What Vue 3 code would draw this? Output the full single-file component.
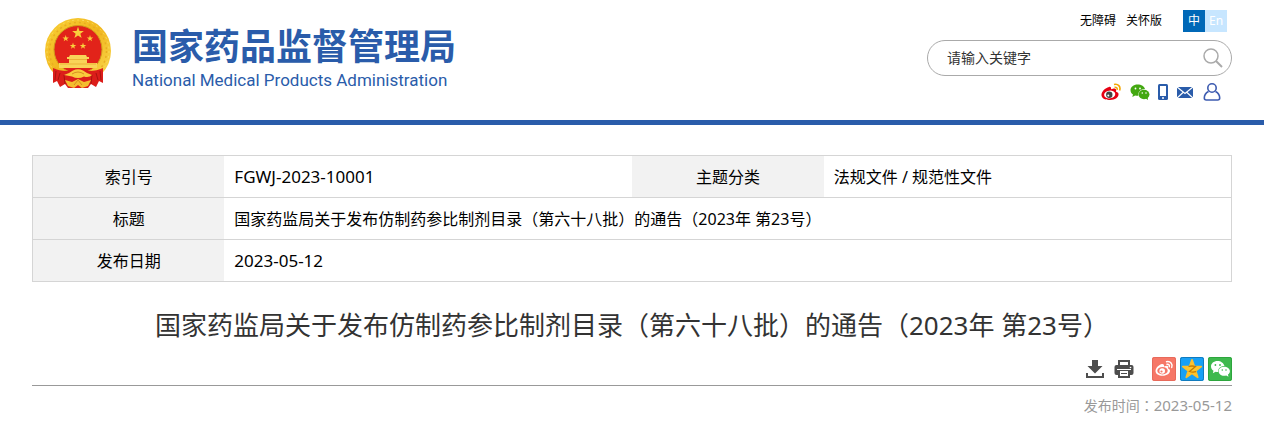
<script setup>
const title = '国家药监局关于发布仿制药参比制剂目录（第六十八批）的通告（2023年 第23号）'
const star = 'M0-10 2.35-3.24 9.51-3.09 3.8 1.24 5.88 8.09 0 4-5.88 8.09-3.8 1.24-9.51-3.09-2.35-3.24Z'
const stars = [
  'translate(33 15) scale(.62)',
  'translate(20.700 20.500) scale(.34)',
  'translate(45 20.500) scale(.34)',
  'translate(28 28) scale(.34)',
  'translate(38 28) scale(.34)',
]
</script>

<template>
  <header class="header">
    <a class="brand" href="#">
      <svg class="emblem" viewBox="0 0 67 71" aria-hidden="true">
        <defs>
          <linearGradient id="gold" x1="0" y1="0" x2="1" y2="1">
            <stop offset="0" stop-color="#f8cf35" />
            <stop offset=".5" stop-color="#f1b71f" />
            <stop offset="1" stop-color="#fadb50" />
          </linearGradient>
        </defs>
        <circle cx="33" cy="33" r="33" fill="url(#gold)" />
        <circle cx="33" cy="33" r="28.500" fill="none" stroke="#e9ad22" stroke-width="1.500" stroke-dasharray="2 3" />
        <circle cx="33" cy="33" r="31" fill="none" stroke="#fbdb5c" stroke-width="1" stroke-dasharray="2 3" />
        <circle cx="33" cy="31.500" r="24" fill="#e2231a" stroke="#d09a1c" />
        <path v-for="s in stars" :key="s" :d="star" :transform="s" fill="#f9cf3c" />
        <path d="M25 37h16l1 2h2v2h-2v4h10v5H14v-5h10v-4h-2v-2h2Z" fill="#f9d458" />
        <path d="M24 41.500h18M15 46h36" stroke="#e5a52a" stroke-width=".7" />
        <path d="M8 50Q14 53 22 53L33 50 44 53Q52 53 58 50V65L54 63 51 69 46 66 43 70H23L20 66 15 69 12 63 8 65Z" fill="#dc1d1a" />
        <path d="M11 53 10 62M15 55 13 62M19 57 20 66M55 53 56 62M51 55 53 62M47 57 46 66" stroke="#a9130e" stroke-width="1" />
        <path d="M19 57Q25 55 28 52.500 33 50 38 52.500 41 55 47 57 44 60 39 58.500 33 61.500 27 58.500 22 60Z" fill="#f9cb3c" />
        <path d="M23 68 20 62 27 64 33 61 39 64 46 62 43 68 37 70 33 67 29 70Z" fill="#f4bd2f" />
        <path d="M27 56Q33 52 39 56M29 67 33 62 37 67" fill="none" stroke="#cf7f1a" stroke-width=".8" />
      </svg>
      <span class="brand-text">
        <span class="brand-cn">国家药品监督管理局</span>
        <span class="brand-en">National Medical Products Administration</span>
      </span>
    </a>
    <div class="tools">
      <nav class="top-links">
        <a href="#">无障碍</a>
        <a href="#">关怀版</a>
        <span class="lang"><a class="on" href="#">中</a><a href="#">En</a></span>
      </nav>
      <form class="search" role="search" @submit.prevent>
        <input type="text" aria-label="请输入关键字" placeholder="请输入关键字" />
        <button type="submit" aria-label="搜索">
          <svg viewBox="0 0 20 20" width="20" height="20" fill="none" stroke="#aaa" stroke-width="1.500">
            <circle cx="8" cy="8" r="7" /><path d="m13 13 6 6" stroke-width="2" />
          </svg>
        </button>
      </form>
      <nav class="social">
        <a href="#" aria-label="微博">
          <svg viewBox="0 0 20 18" width="20" height="18">
            <path d="M8 4C4 5 0 9 .5 12.500 1 16 5 17 9 17c5 0 9-3 8.500-6 0-1.500-1.500-2-2.500-2.300.5-1.500 0-3-1.500-3.200-1 0-2 .2-3.500.8C10.500 4.500 9.500 3.500 8 4Z" fill="#e60012" />
            <ellipse cx="8.700" cy="11.500" rx="5.600" ry="3.900" transform="rotate(-8 8.700 11.500)" fill="#fff" />
            <circle cx="8.300" cy="11.800" r="3.200" fill="#444" /><circle cx="7.300" cy="12.600" r="1" fill="#fff" />
            <path d="M13 1.500c4-1 7 2 5.600 6M13.500 4.300c2-.4 3 .8 2.600 2.600" fill="none" stroke="#f3a600" stroke-width="1.600" />
          </svg>
        </a>
        <a href="#" aria-label="微信">
          <svg viewBox="0 0 20 18" width="20" height="18">
            <path d="M7.500 1.500C3.500 1.500.5 4 .5 7c0 2 1 3.500 2.500 4.500L2.300 14l2.900-1.500c1 .3 2 .4 3.100.3-.5-4 2.700-6.800 6.700-6.700C14.400 3.500 11.500 1.500 7.500 1.500Z" fill="#43a811" />
            <ellipse cx="14" cy="11.500" rx="5.500" ry="4.700" fill="#43a811" /><path d="m15 15 3 2-.4-3Z" fill="#43a811" />
            <g fill="#fff"><circle cx="5.500" cy="5.500" r=".9" /><circle cx="10" cy="5.500" r=".9" /><circle cx="12.300" cy="10" r=".8" /><circle cx="16" cy="10" r=".8" /></g>
          </svg>
        </a>
        <a href="#" aria-label="手机版">
          <svg viewBox="0 0 10 18" width="10" height="18"><rect y="1" width="10" height="16" rx="1.500" fill="#2a5caa" /><path d="M2 3h6v10H2z" fill="#fff" /><circle cx="5" cy="15" r="1" fill="#fff" /></svg>
        </a>
        <a href="#" aria-label="邮箱">
          <svg viewBox="0 0 16 18" width="16" height="18"><path d="M0 4h16v11H0Z" fill="#2a5caa" /><path d="m0 4 8 6.500L16 4M0 15l6-5.500M16 15l-6-5.500" fill="none" stroke="#fff" stroke-width="1.200" /></svg>
        </a>
        <a href="#" class="user" aria-label="个人中心">
          <svg viewBox="0 0 18 18" width="18" height="18" fill="none" stroke="#3d5bb0" stroke-width="1.600"><circle cx="9" cy="5" r="4.200" /><path d="M5.500 8.500C2.500 10 1.300 12 1.300 15q0 2 2 2h11.400q2 0 2-2c0-3-1.200-5-4.200-6.500" /></svg>
        </a>
      </nav>
    </div>
  </header>

  <main class="main">
    <table class="info">
      <colgroup><col class="label" /><col /><col class="label" /><col /></colgroup>
      <tbody>
        <tr><th scope="row">索引号</th><td class="latin">FGWJ-2023-10001</td><th scope="row">主题分类</th><td>法规文件 / 规范性文件</td></tr>
        <tr><th scope="row">标题</th><td colspan="3">{{ title }}</td></tr>
        <tr><th scope="row">发布日期</th><td class="latin" colspan="3">2023-05-12</td></tr>
      </tbody>
    </table>
    <h1>{{ title }}</h1>
    <div class="actions">
      <button type="button" aria-label="下载">
        <svg viewBox="0 0 20 20" width="20" height="20" fill="#4d4d4d"><path d="M7 1h6v6h4.500L10 14.500 2.500 7H7Z" /><path d="M1 14h2v3h14v-3h2v5H1Z" /></svg>
      </button>
      <button type="button" aria-label="打印">
        <svg viewBox="0 0 20 20" width="20" height="20"><path d="M4 1h12v5H4Z" fill="#4d4d4d" /><path d="M6 3h8v3H6Z" fill="#fff" /><rect x=".5" y="6" width="19" height="10" rx="2" fill="#4d4d4d" /><path d="M4 10.500h12V19H4Z" fill="#4d4d4d" /><path d="M3 10h14v1H3Z" fill="#fff" /><path d="M6 12h8v5H6Z" fill="#fff" /><path d="M7 14.500h6" stroke="#4d4d4d" /><circle cx="16.500" cy="8.500" r=".8" fill="#fff" /></svg>
      </button>
      <span class="share">
        <button type="button" aria-label="分享到微博">
          <svg viewBox="0 0 24 24" width="24" height="24"><rect width="24" height="24" rx="2" fill="#f67767" /><rect x=".5" y=".5" width="23" height="23" rx="2" fill="none" stroke="#e76a5b" />
            <path d="M10 7c-3 .5-6.500 4-6.500 7 0 3.200 3.500 4.700 7 4.700 4.500 0 7.500-2.500 7.500-5 0-1.300-1-2-2-2.300.5-1.300 0-2.500-1-2.600-1 0-2 .2-3 .6C12.500 8 11.500 6.700 10 7Z" fill="#fff" />
            <ellipse cx="10.500" cy="13.700" rx="5.200" ry="3.700" fill="#f67767" /><circle cx="10.200" cy="14" r="2.800" fill="#fff" /><circle cx="9.500" cy="14.500" r="1.100" fill="#f67767" />
            <path d="M14.500 4.700c4-.8 6.500 2.300 5.200 5.800M15 7.300c1.800-.3 2.700.8 2.300 2.400" fill="none" stroke="#fff" stroke-width="1.400" stroke-linecap="round" /></svg>
        </button>
        <button type="button" aria-label="分享到QQ空间">
          <svg viewBox="0 0 24 24" width="24" height="24"><rect width="24" height="24" rx="2" fill="#18a0f5" /><rect x=".5" y=".5" width="23" height="23" rx="2" fill="none" stroke="#117bbd" />
            <path :d="star" transform="translate(12 12.500) scale(.97)" fill="#fdc72c" stroke="#fdc02c" stroke-width="1.800" stroke-linejoin="round" />
            <path d="M8.500 9.500q3.500-1 7 0L9.500 14.500q3 1 6.500 .2" fill="none" stroke="#c47a00" stroke-width="1.300" /></svg>
        </button>
        <button type="button" aria-label="分享到微信">
          <svg viewBox="0 0 24 24" width="24" height="24"><rect width="24" height="24" rx="2" fill="#3eb94e" /><rect x=".5" y=".5" width="23" height="23" rx="2" fill="none" stroke="#2da53c" />
            <path d="M9.500 4C5.700 4 3 6.500 3 9.400c0 1.900 1 3.400 2.500 4.400l-.7 2.400 2.800-1.400c.8.200 1.700.3 2.600.3-.4-3.500 2.500-6.100 6.300-6C15.700 6 12.900 4 9.500 4Z" fill="#fff" />
            <path d="M16 9.800c-3 0-5.400 2-5.400 4.500s2.400 4.500 5.400 4.500c.8 0 1.500-.1 2.200-.4l2.300 1.400-.6-2.200c1.300-.8 2-2 2-3.300 0-2.500-2.700-4.500-5.900-4.500Z" fill="#fff" />
            <g fill="#3eb94e"><circle cx="7.400" cy="8" r=".9" /><circle cx="12" cy="8" r=".9" /><circle cx="14.300" cy="13" r=".8" /><circle cx="18" cy="13" r=".8" /></g></svg>
        </button>
      </span>
    </div>
    <p class="date">发布时间<span class="colon">：</span><time datetime="2023-05-12">2023-05-12</time></p>
  </main>
</template>

<style>
body {
  background: #fff;
  font-family: "Noto Sans", "Noto Sans CJK SC", sans-serif;
}
</style>

<style scoped>
a { color: inherit; text-decoration: none; }
button { padding: 0; border: 0; background: none; cursor: pointer; }
svg { display: block; }
.header {
  display: flex;
  justify-content: space-between;
  padding: 10px 32px 19px 45px;
  border-bottom: 5px solid #2a5caa;
}
.brand { display: flex; align-items: flex-start; gap: 20px; padding-top: 8px; color: #2a5caa; }
.emblem { width: 67px; height: 71px; }
.brand-text { display: flex; flex-direction: column; }
.brand-cn { font: 700 36px/53px "Noto Sans CJK SC", sans-serif; }
.brand-en { font: 17px/18px Roboto, sans-serif; }
.tools { display: flex; flex-direction: column; width: 305px; }
.top-links { display: flex; justify-content: flex-end; gap: 10px; padding-right: 5px; font-size: 12px; line-height: 22px; color: #000; }
.lang { display: flex; margin-left: 11px; }
.lang a { width: 22px; text-align: center; color: #fff; background: #c7e6ff; }
.lang .on { background: #0068b7; }
.search {
  display: flex;
  align-items: center;
  box-sizing: border-box;
  height: 36px;
  margin-top: 8px;
  padding: 0 8px 0 19px;
  border: 1px solid #aaa;
  border-radius: 18px;
}
.search input { flex: 1; min-width: 0; padding: 0; border: 0; outline: 0; background: none; font: inherit; font-size: 14px; line-height: 20px; color: #333; }
.search input::placeholder { color: #333; opacity: 1; }
.social { display: flex; align-items: center; justify-content: space-between; margin-top: 7px; padding: 0 11px 0 174px; }
.user { margin-left: 2px; }
.main { padding: 30px 32px 0; }
.info { width: 100%; border-collapse: collapse; table-layout: fixed; font-size: 16px; line-height: 24px; color: #000; }
.label { width: 16%; }
.info tr { border: 1px solid #d5d5d5; }
.info th { padding: 9px 0 8px; background: #f2f2f2; font-weight: 400; text-align: center; }
.info td { padding: 9px 10px 8px; }
.info .latin { font-size: 17px; }
h1 { margin: 24px 0 0; font-size: 26px; line-height: 38px; font-weight: 400; text-align: center; color: #333; }
.actions { display: flex; align-items: center; justify-content: flex-end; gap: 9px; margin-top: 13px; padding-bottom: 4px; border-bottom: 1px solid #999; }
.share { display: flex; gap: 4px; margin-left: 9px; }
.date { margin: 9px 0 0; font-size: 14px; line-height: 20px; text-align: right; color: #999; }
.date time { font-size: 15px; }
.colon { font-family: "Noto Sans CJK TC", sans-serif; }
</style>
